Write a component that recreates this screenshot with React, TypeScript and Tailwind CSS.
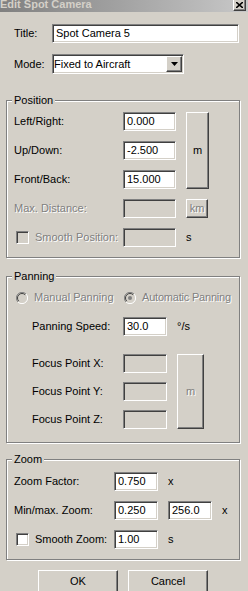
import React from "react";

const sunken =
  "border border-t-[#808080] border-l-[#808080] border-r-white border-b-white shadow-[inset_1px_1px_0_#404040,inset_-1px_-1px_0_#d4d0c8]";
const raised =
  "border border-t-white border-l-white border-r-[#404040] border-b-[#404040] shadow-[inset_-1px_-1px_0_#808080]";
const group =
  "mx-[6px] w-[234px] border border-[#808080] shadow-[inset_1px_1px_0_#fff,1px_1px_0_#fff]";
const dim = "text-[#808080] [text-shadow:1px_1px_0_#fff]";

function Field({ value, w, disabled }: { value?: string; w: string; disabled?: boolean }) {
  return (
    <div
      className={`${sunken} ${w} h-[19px] flex items-center pl-[3px] ${
        disabled ? "bg-[#d4d0c8]" : "bg-white"
      }`}
    >
      {value}
    </div>
  );
}

function Check({ disabled }: { disabled?: boolean }) {
  return (
    <span
      className={`${sunken} inline-block h-[13px] w-[13px] shrink-0 ${
        disabled ? "bg-[#d4d0c8]" : "bg-white"
      }`}
    />
  );
}

function Radio({ checked }: { checked?: boolean }) {
  return (
    <svg width="12" height="12" viewBox="0 0 12 12" className="shrink-0">
      <circle cx="6" cy="6" r="5.5" fill="#d4d0c8" />
      <path d="M10 2 A5.5 5.5 0 0 0 2 10" stroke="#808080" strokeWidth="1" fill="none" />
      <path d="M9.2 2.8 A4.5 4.5 0 0 0 2.8 9.2" stroke="#404040" strokeWidth="1" fill="none" />
      <path d="M2 10 A5.5 5.5 0 0 0 10 2" stroke="#fff" strokeWidth="1" fill="none" />
      {checked && <circle cx="6" cy="6" r="2" fill="#808080" />}
    </svg>
  );
}

function Legend({ children }: { children: React.ReactNode }) {
  return <legend className="ml-[5px] bg-[#d4d0c8] px-[2px] leading-[13px]">{children}</legend>;
}

export default function App() {
  return (
    <div className="h-[591px] w-[248px] overflow-hidden whitespace-nowrap bg-[#d4d0c8] font-['Liberation_Sans',Arial,sans-serif] text-[11px] leading-[13px] text-black">
      {/* title bar */}
      <div className="flex h-[12px] items-start justify-between overflow-hidden bg-gradient-to-r from-[#808080] to-[#c8c8c8]">
        <span className="mt-[-2px] text-[11px] font-bold text-[#d4d0c8]">Edit Spot Camera</span>
        <div className={`${raised} mr-[2px] mt-[-3px] flex h-[14px] w-[13px] items-end justify-center bg-[#d4d0c8] pb-[2px]`}>
          <svg width="7" height="6" viewBox="0 0 7 6">
            <path d="M0 0 L7 6 M7 0 L0 6" stroke="#000" strokeWidth="1.6" />
          </svg>
        </div>
      </div>

      <div className="mt-[12px] flex items-center pl-[14px]">
        <span className="w-[38px]">Title:</span>
        <Field value="Spot Camera 5" w="w-[187px]" />
      </div>

      <div className="mt-[11px] flex items-center pl-[14px]">
        <span className="w-[38px]">Mode:</span>
        <div className={`${sunken} flex h-[20px] w-[132px] items-center justify-between bg-white pl-[1px] pr-[1px]`}>
          <span>Fixed to Aircraft</span>
          <div className={`${raised} flex h-[16px] w-[16px] items-center justify-center bg-[#d4d0c8]`}>
            <svg width="7" height="4" viewBox="0 0 7 4">
              <path d="M0 0 H7 L3.5 4 Z" fill="#000" />
            </svg>
          </div>
        </div>
      </div>

      {/* Position */}
      <fieldset className={`${group} mt-[20px] pb-[10px] pt-[5px]`}>
        <Legend>Position</Legend>
        <div className="grid grid-cols-[99px_53px_23px] grid-rows-[19px_19px_19px_19px_19px] gap-x-[10px] gap-y-[10px] pl-[7px]">
          <span className="self-center">Left/Right:</span>
          <Field value="0.000" w="w-[53px]" />
          <div className={`${raised} row-span-3 flex items-center justify-center`}>m</div>
          <span className="self-center">Up/Down:</span>
          <Field value="-2.500" w="w-[53px]" />
          <span className="self-center">Front/Back:</span>
          <Field value="15.000" w="w-[53px]" />
          <span className={`self-center ${dim}`}>Max. Distance:</span>
          <Field w="w-[53px]" disabled />
          <div className={`${raised} flex w-[22px] items-center justify-center ${dim}`}>km</div>
          <div className="flex items-center gap-[6px] pl-[2px]">
            <Check disabled />
            <span className={dim}>Smooth Position:</span>
          </div>
          <Field w="w-[53px]" disabled />
          <span className="self-center">s</span>
        </div>
      </fieldset>

      {/* Panning */}
      <fieldset className={`${group} mt-[12px] pb-[13px] pt-[8px]`}>
        <Legend>Panning</Legend>
        <div className="flex h-[13px] items-center pl-[9px]">
          <div className="flex w-[108px] items-center gap-[6px]">
            <Radio />
            <span className={dim}>Manual Panning</span>
          </div>
          <div className="flex items-center gap-[6px]">
            <Radio checked />
            <span className={`${dim} tracking-[-0.2px]`}>Automatic Panning</span>
          </div>
        </div>
        <div className="mt-[13px] flex items-center pl-[25px]">
          <span className="w-[91px]">Panning Speed:</span>
          <Field value="30.0" w="w-[44px]" />
          <span className="ml-[10px]">°/s</span>
        </div>
        <div className="mt-[18px] grid grid-cols-[81px_44px_27px] grid-rows-[19px_19px_19px] gap-x-[10px] gap-y-[9px] pl-[25px]">
          <span className="self-center">Focus Point X:</span>
          <Field w="w-[44px]" disabled />
          <div className={`${raised} row-span-3 flex items-center justify-center ${dim}`}>m</div>
          <span className="self-center">Focus Point Y:</span>
          <Field w="w-[44px]" disabled />
          <span className="self-center">Focus Point Z:</span>
          <Field w="w-[44px]" disabled />
        </div>
      </fieldset>

      {/* Zoom */}
      <fieldset className={`${group} mt-[10px] pb-[10px] pt-[6px]`}>
        <Legend>Zoom</Legend>
        <div className="grid grid-cols-[90px_44px_44px_auto] grid-rows-[19px_19px_19px] gap-x-[10px] gap-y-[10px] pl-[7px]">
          <span className="self-center">Zoom Factor:</span>
          <Field value="0.750" w="w-[44px]" />
          <span className="col-span-2 self-center">x</span>
          <span className="self-center">Min/max. Zoom:</span>
          <Field value="0.250" w="w-[44px]" />
          <Field value="256.0" w="w-[44px]" />
          <span className="self-center">x</span>
          <div className="flex items-center gap-[6px] pl-[2px]">
            <Check />
            <span>Smooth Zoom:</span>
          </div>
          <Field value="1.00" w="w-[44px]" />
          <span className="col-span-2 self-center">s</span>
        </div>
      </fieldset>

      <div className="mt-[10px] flex gap-[10px] pl-[38px]">
        <button className={`${raised} h-[23px] w-[80px] bg-[#d4d0c8]`}>OK</button>
        <button className={`${raised} h-[23px] w-[80px] bg-[#d4d0c8]`}>Cancel</button>
      </div>
    </div>
  );
}
